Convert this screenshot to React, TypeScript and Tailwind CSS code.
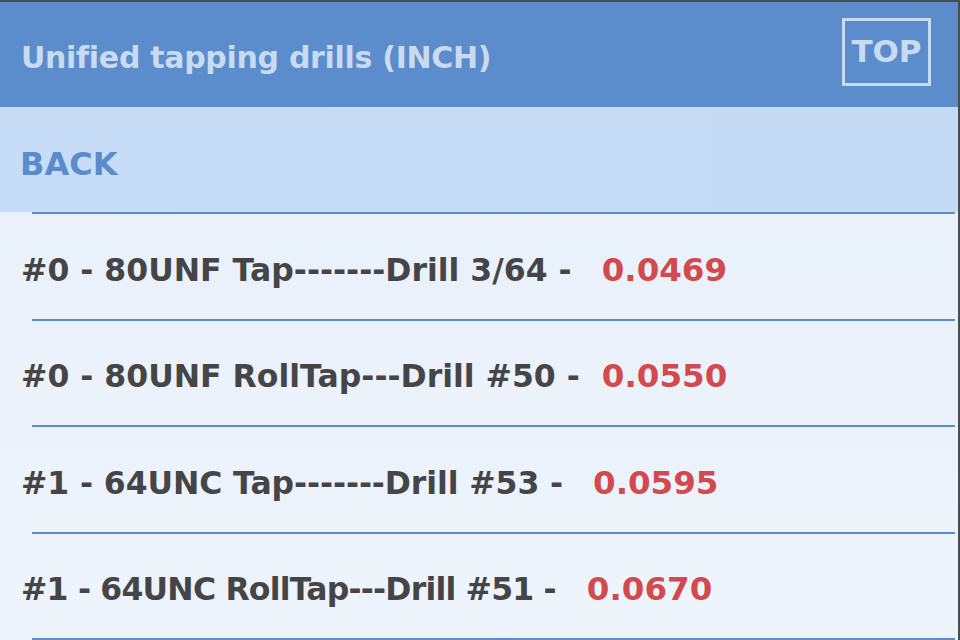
import React from 'react';

const rows = [
  { label: '#0 - 80UNF Tap-------Drill 3/64 -', value: '0.0469', track: 'tracking-[0px]', gap: 'ml-[30px]' },
  { label: '#0 - 80UNF RollTap---Drill #50 -', value: '0.0550', track: 'tracking-[0px]', gap: 'ml-[22px]' },
  { label: '#1 - 64UNC Tap-------Drill #53 -', value: '0.0595', track: 'tracking-[-0.1px]', gap: 'ml-[30px]' },
  { label: '#1 - 64UNC RollTap---Drill #51 -', value: '0.0670', track: 'tracking-[-0.8px]', gap: 'ml-[31px]' },
];

export default function App() {
  return (
    <div
      className="w-[960px] h-[640px] overflow-hidden flex flex-col border-t-2 border-r-2 border-[#4a4d52] bg-gradient-to-b from-[#e7eff9] to-[#eef4fc]"
      style={{ fontFamily: '"DejaVu Sans", "Noto Sans", sans-serif' }}
    >
      {/* Title bar */}
      <div className="h-[105px] shrink-0 bg-[#5b8ccb] flex items-center justify-between pl-[21px] pr-[27px]">
        <h1 className="text-[30px] font-bold text-[#c9dbf1] tracking-[-0.3px] pt-[6px]">
          Unified tapping drills (INCH)
        </h1>
        <button className="w-[89px] h-[68px] border-[3px] border-[#c9dbf1] text-[#c9dbf1] text-[31px] font-bold flex items-center justify-center mt-[-6px]">
          TOP
        </button>
      </div>

      {/* Back */}
      <div className="h-[105px] shrink-0 bg-gradient-to-r from-[#c7dcf7] to-[#c5daf5] flex items-center pl-[20px]">
        <span className="text-[32px] font-bold text-[#5a8bcb] pt-[8px]">BACK</span>
      </div>

      {/* Rows */}
      <div className="flex flex-col">
        {rows.map((r) => (
          <div key={r.value} className="flex flex-col">
            <div className="h-[2px] ml-[32px] mr-[3px] bg-[#5b8ccb]" />
            <div className="h-[104.5px] flex items-center pl-[21px] pt-[8px]">
              <span className={`${r.track} text-[31.5px] font-bold text-[#454547]`}>{r.label}</span>
              <span className={`${r.gap} text-[32.5px] font-bold text-[#d2494e]`}>{r.value}</span>
            </div>
          </div>
        ))}
        <div className="h-[2px] ml-[32px] mr-[3px] bg-[#5b8ccb]" />
      </div>
    </div>
  );
}
